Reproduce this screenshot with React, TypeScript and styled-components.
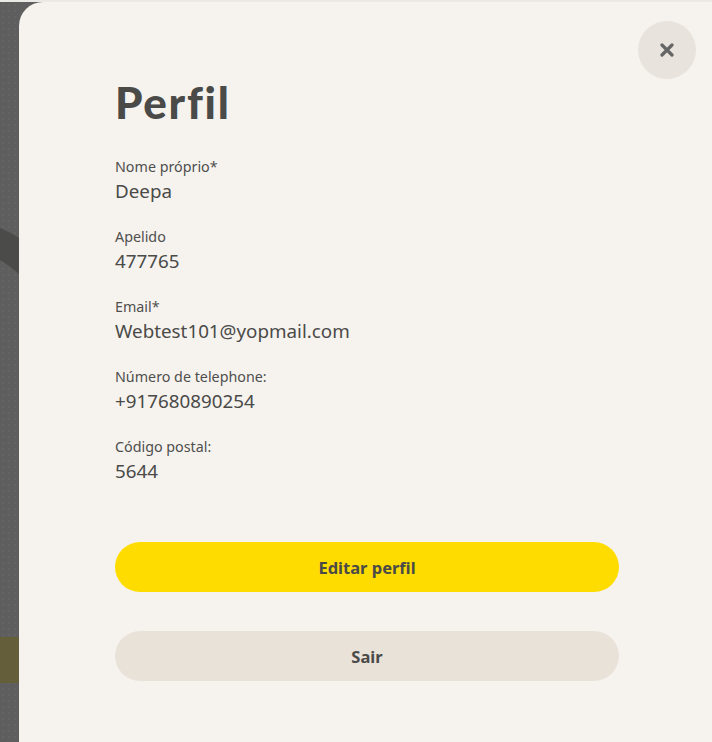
import React from "react";
import styled, { createGlobalStyle } from "styled-components";

const Global = createGlobalStyle`
  html, body { margin: 0; padding: 0; }
  body { background: #5f5f5f; width: 712px; height: 742px; overflow: hidden; }
  #root { height: 742px; }
`;

const Page = styled.div`
  display: flex;
  flex-direction: column;
  height: 742px;
`;

const TopLine = styled.div`
  height: 2px;
  background: #ebe9e5;
  flex: none;
`;

const Stage = styled.div`
  flex: 1;
  display: flex;
  min-height: 0;
`;

const Backdrop = styled.div`
  position: relative;
  width: 19px;
  flex: none;
  background-color: #5e5e5e;
  background-image: radial-gradient(#6a6a6a 0.6px, transparent 0.8px);
  background-size: 6px 6px;
  overflow: hidden;
`;

const Band = styled.svg`
  position: absolute;
  left: 0;
  top: 224px;
`;

const OliveBlock = styled.div`
  position: absolute;
  left: -20px;
  top: 635px;
  width: 60px;
  height: 46px;
  border-radius: 12px;
  background: #645e3b;
`;

const Panel = styled.section`
  position: relative;
  flex: 1;
  background: #f6f3ef;
  border-top-left-radius: 24px;
  padding: 74px 0 0 96px;
  font-family: "Noto Sans", "Open Sans", sans-serif;
  color: #4a4a48;
`;

const CloseButton = styled.button`
  position: absolute;
  top: 19px;
  right: 16px;
  width: 58px;
  height: 58px;
  border-radius: 50%;
  border: none;
  background: #e8e3dc;
  display: flex;
  align-items: center;
  justify-content: center;
  padding: 0;
  cursor: pointer;
`;

const Title = styled.h1`
  margin: 0 0 29px;
  font-family: Lato, sans-serif;
  font-weight: 900;
  font-size: 44px;
  line-height: 52px;
  letter-spacing: 1.7px;
  color: #4a4a48;
`;

const Fields = styled.div`
  display: flex;
  flex-direction: column;
  gap: 21px;
  width: 504px;
`;

const Field = styled.div`
  display: flex;
  flex-direction: column;
`;

const Label = styled.span`
  font-size: 14.3px;
  line-height: 19px;
  color: #4f4f4d;
`;

const Value = styled.span`
  font-size: 18.8px;
  line-height: 30px;
  color: #4a4a48;
`;

const Actions = styled.div`
  display: flex;
  flex-direction: column;
  gap: 39px;
  margin-top: 56px;
  width: 504px;
`;

const Button = styled.button<{ $variant: "primary" | "secondary" }>`
  height: 50px;
  border: none;
  border-radius: 25px;
  background: ${(p) => (p.$variant === "primary" ? "#ffdc00" : "#e9e2d9")};
  font-family: "Noto Sans", "Open Sans", sans-serif;
  font-weight: 700;
  font-size: 16.5px;
  color: #4a4a48;
  cursor: pointer;
`;

const fields = [
  { label: "Nome próprio*", value: "Deepa" },
  { label: "Apelido", value: "477765" },
  { label: "Email*", value: "Webtest101@yopmail.com" },
  { label: "Número de telephone:", value: "+917680890254" },
  { label: "Código postal:", value: "5644" },
];

export default function App() {
  return (
    <Page>
      <Global />
      <TopLine />
      <Stage>
        <Backdrop>
          <Band width="19" height="60" viewBox="0 0 19 60">
            <path d="M0 2 Q10 6 19 12 L19 48 Q10 40 0 34 Z" fill="#4b4b4a" />
          </Band>
          <OliveBlock />
        </Backdrop>
        <Panel>
          <CloseButton aria-label="Fechar">
            <svg width="14" height="14" viewBox="0 0 14 14">
              <path d="M2 2 L12 12 M12 2 L2 12" stroke="#656565" strokeWidth="3.2" strokeLinecap="round" />
            </svg>
          </CloseButton>
          <Title>Perfil</Title>
          <Fields>
            {fields.map((f) => (
              <Field key={f.label}>
                <Label>{f.label}</Label>
                <Value>{f.value}</Value>
              </Field>
            ))}
          </Fields>
          <Actions>
            <Button $variant="primary">Editar perfil</Button>
            <Button $variant="secondary">Sair</Button>
          </Actions>
        </Panel>
      </Stage>
    </Page>
  );
}
